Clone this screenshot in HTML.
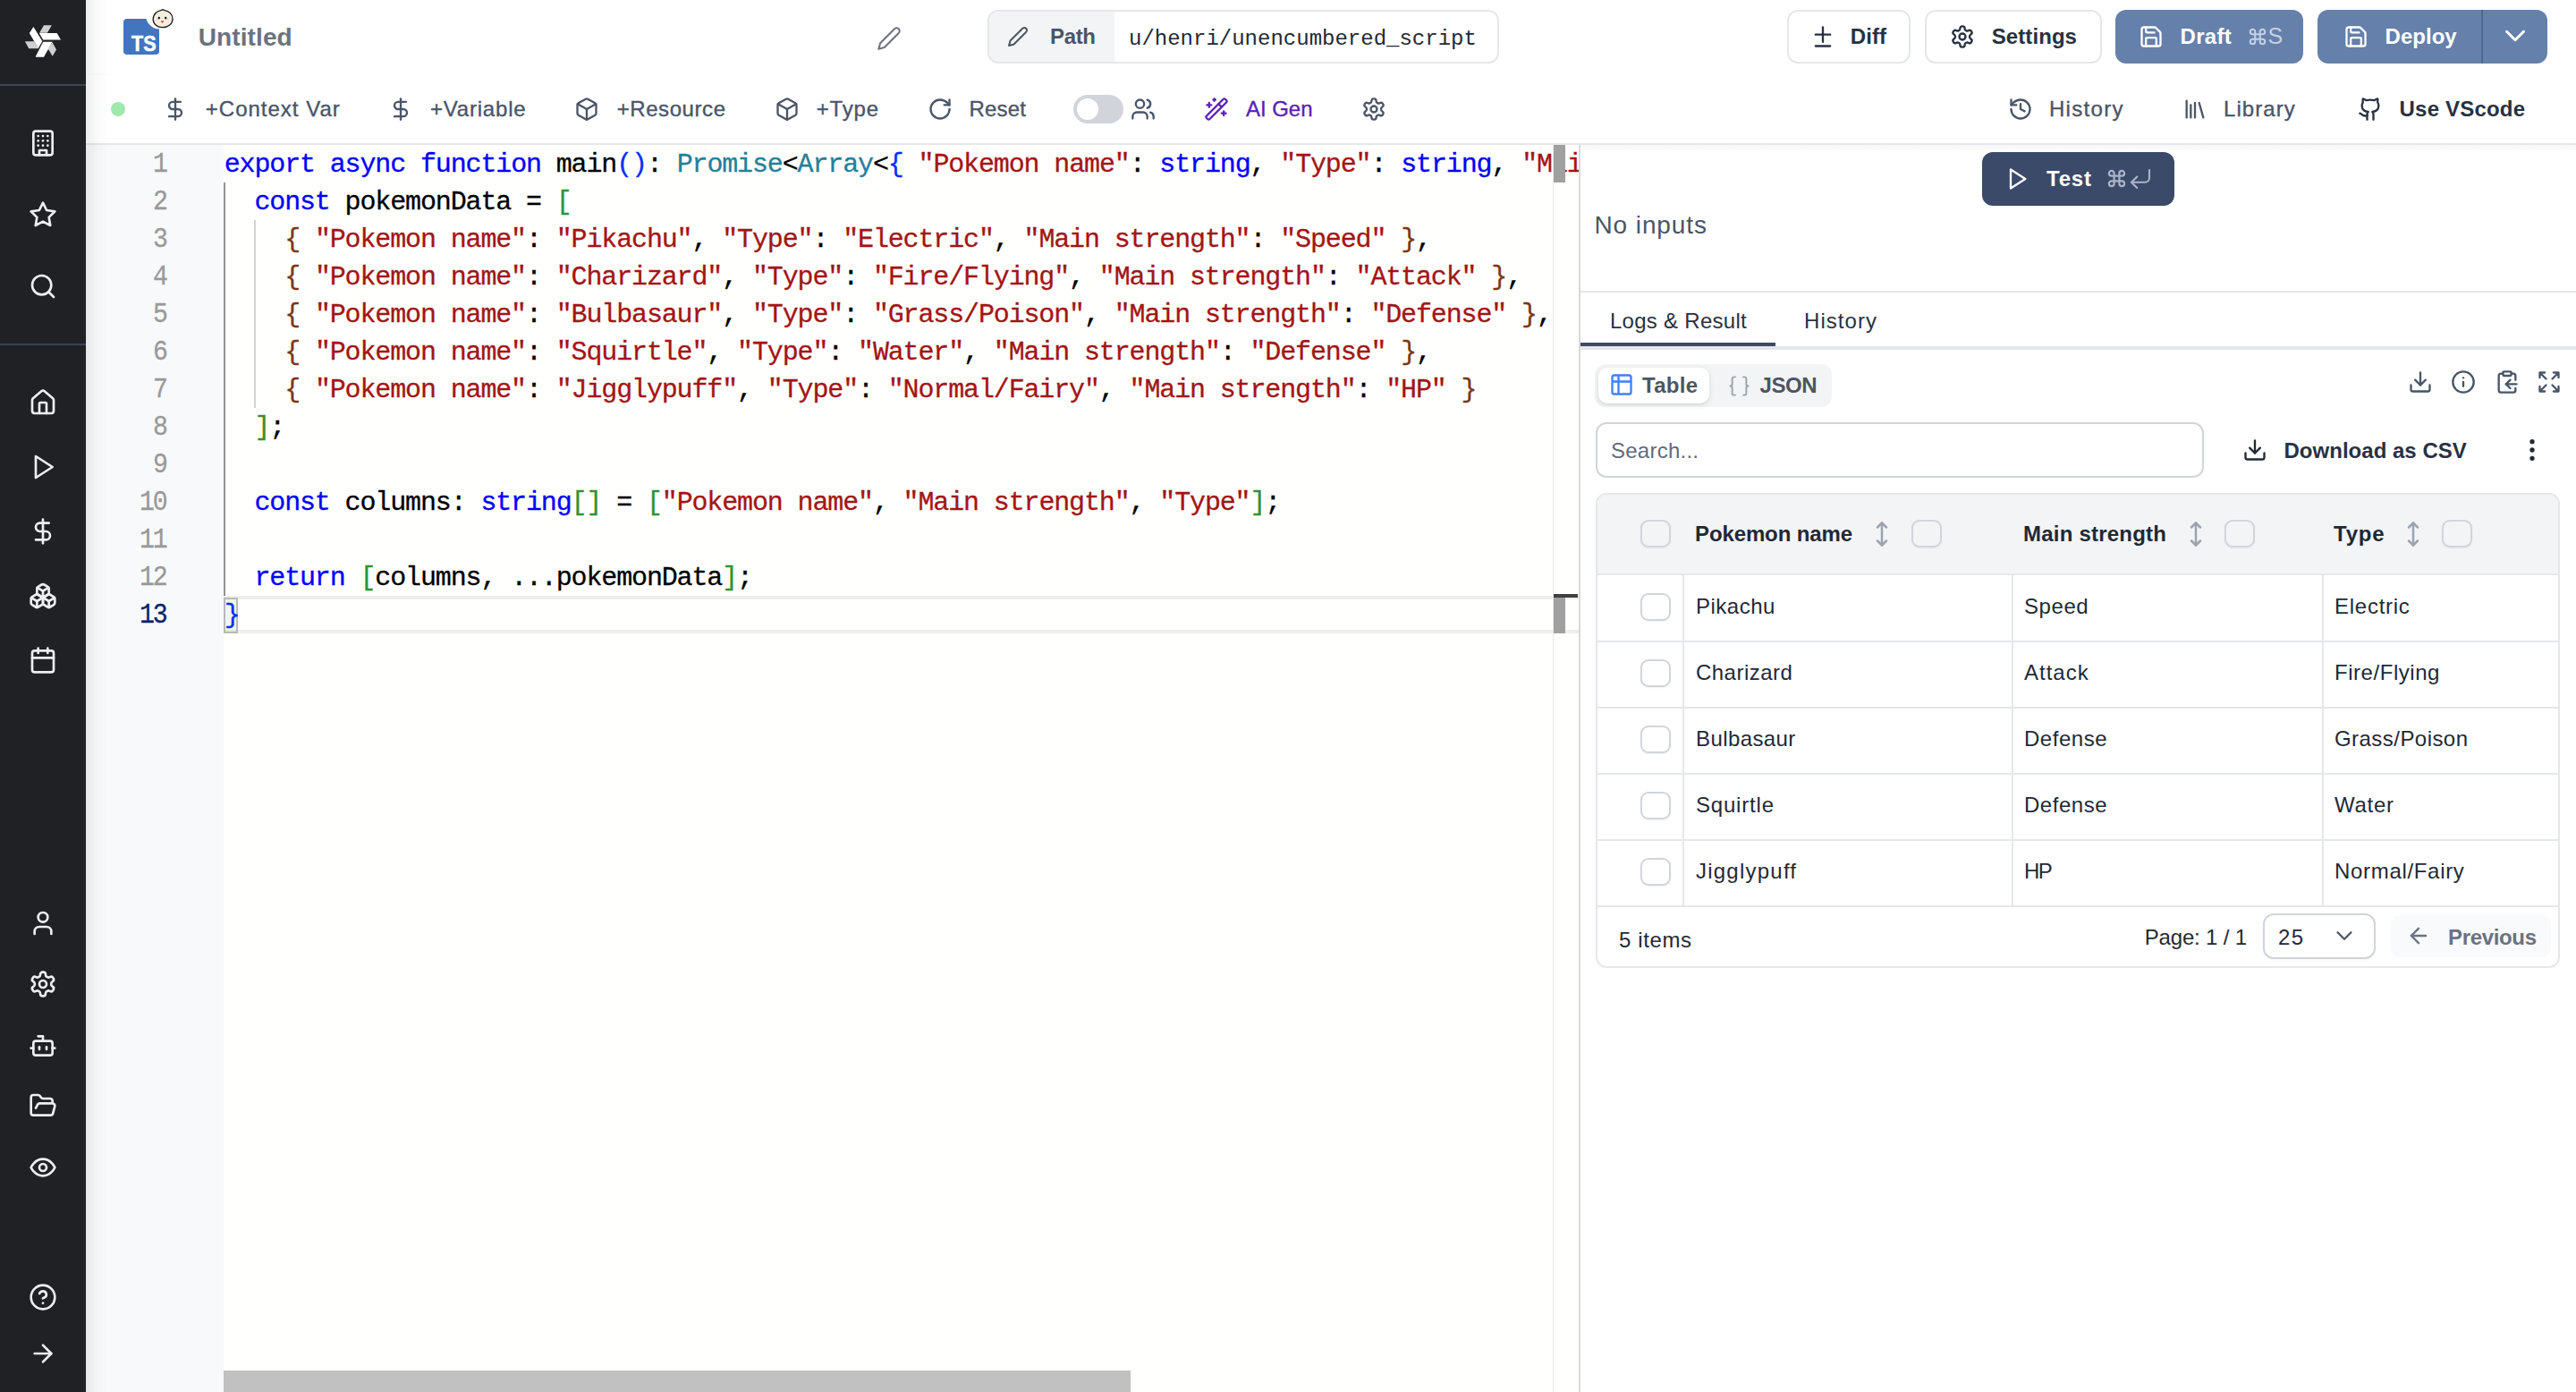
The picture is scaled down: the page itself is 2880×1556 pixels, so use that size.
<!DOCTYPE html>
<html><head><meta charset="utf-8"><title>Windmill</title>
<style>
html,body{margin:0;padding:0;width:2880px;height:1556px;overflow:hidden;background:#ffffff;position:relative}
.t{position:absolute;white-space:pre;line-height:1;font-family:"Liberation Sans",sans-serif}
.r{position:absolute}
</style></head><body>
<div class="r" style="left:0px;top:0px;width:96px;height:1556px;background:#202125;"></div>
<div class="r" style="left:0px;top:94px;width:96px;height:2px;background:#3b4456;"></div>
<div class="r" style="left:0px;top:384px;width:96px;height:2px;background:#3b4456;"></div>
<svg class="r" style="left:18px;top:18px" width="60" height="60" viewBox="0 0 1392 1392">
<polygon fill="#cfcfcf" points="720,235 925,235 810,435 605,435"/>
<polygon fill="#cfcfcf" points="230,655 470,655 580,840 330,840"/>
<polygon fill="#cfcfcf" points="940,680 1045,870 945,1040 830,855"/>
<polygon fill="#ffffff" points="450,280 680,650 575,835 345,440"/>
<polygon fill="#ffffff" points="600,440 1060,440 1160,615 700,615"/>
<polygon fill="#ffffff" points="700,665 940,665 720,1060 500,1060"/>
</svg>
<svg class="r" style="left:32.0px;top:144.0px;" width="32" height="32" viewBox="0 0 24 24" fill="none" stroke="#eceef1" stroke-width="2" stroke-linecap="round" stroke-linejoin="round"><rect width="16" height="20" x="4" y="2" rx="2" ry="2"/><path d="M9 22v-4h6v4"/><path d="M8 6h.01"/><path d="M16 6h.01"/><path d="M12 6h.01"/><path d="M12 10h.01"/><path d="M12 14h.01"/><path d="M16 10h.01"/><path d="M16 14h.01"/><path d="M8 10h.01"/><path d="M8 14h.01"/></svg>
<svg class="r" style="left:32.0px;top:223.5px;" width="32" height="32" viewBox="0 0 24 24" fill="none" stroke="#eceef1" stroke-width="2" stroke-linecap="round" stroke-linejoin="round"><polygon points="12 2 15.09 8.26 22 9.27 17 14.14 18.18 21.02 12 17.77 5.82 21.02 7 14.14 2 9.27 8.91 8.26 12 2"/></svg>
<svg class="r" style="left:32.0px;top:304.0px;" width="32" height="32" viewBox="0 0 24 24" fill="none" stroke="#eceef1" stroke-width="2" stroke-linecap="round" stroke-linejoin="round"><circle cx="11" cy="11" r="8"/><path d="m21 21-4.3-4.3"/></svg>
<svg class="r" style="left:32.0px;top:434.0px;" width="32" height="32" viewBox="0 0 24 24" fill="none" stroke="#eceef1" stroke-width="2" stroke-linecap="round" stroke-linejoin="round"><path d="M15 21v-8a1 1 0 0 0-1-1h-4a1 1 0 0 0-1 1v8"/><path d="M3 10a2 2 0 0 1 .709-1.528l7-5.999a2 2 0 0 1 2.582 0l7 5.999A2 2 0 0 1 21 10v9a2 2 0 0 1-2 2H5a2 2 0 0 1-2-2z"/></svg>
<svg class="r" style="left:32.0px;top:506.0px;" width="32" height="32" viewBox="0 0 24 24" fill="none" stroke="#eceef1" stroke-width="2" stroke-linecap="round" stroke-linejoin="round"><polygon points="6 3 20 12 6 21 6 3"/></svg>
<svg class="r" style="left:32.0px;top:578.0px;" width="32" height="32" viewBox="0 0 24 24" fill="none" stroke="#eceef1" stroke-width="2" stroke-linecap="round" stroke-linejoin="round"><line x1="12" x2="12" y1="2" y2="22"/><path d="M17 5H9.5a3.5 3.5 0 0 0 0 7h5a3.5 3.5 0 0 1 0 7H6"/></svg>
<svg class="r" style="left:32.0px;top:650.0px;" width="32" height="32" viewBox="0 0 24 24" fill="none" stroke="#eceef1" stroke-width="2" stroke-linecap="round" stroke-linejoin="round"><path d="M2.97 12.92A2 2 0 0 0 2 14.63v3.24a2 2 0 0 0 .97 1.71l3 1.8a2 2 0 0 0 2.06 0L12 19v-5.5l-5-3-4.03 2.42Z"/><path d="m7 16.5-4.74-2.85"/><path d="m7 16.5 5-3"/><path d="M7 16.5v5.17"/><path d="M12 13.5V19l3.97 2.38a2 2 0 0 0 2.06 0l3-1.8a2 2 0 0 0 .97-1.71v-3.24a2 2 0 0 0-.97-1.71L17 10.5l-5 3Z"/><path d="m17 16.5-5-3"/><path d="m17 16.5 4.74-2.85"/><path d="M17 16.5v5.17"/><path d="M7.97 4.42A2 2 0 0 0 7 6.13v4.37l5 3 5-3V6.13a2 2 0 0 0-.97-1.71l-3-1.8a2 2 0 0 0-2.06 0l-3 1.8Z"/><path d="M12 8 7.26 5.15"/><path d="m12 8 4.74-2.85"/><path d="M12 13.5V8"/></svg>
<svg class="r" style="left:32.0px;top:722.0px;" width="32" height="32" viewBox="0 0 24 24" fill="none" stroke="#eceef1" stroke-width="2" stroke-linecap="round" stroke-linejoin="round"><rect width="18" height="18" x="3" y="4" rx="2" ry="2"/><line x1="16" x2="16" y1="2" y2="6"/><line x1="8" x2="8" y1="2" y2="6"/><line x1="3" x2="21" y1="10" y2="10"/></svg>
<svg class="r" style="left:32.0px;top:1016.0px;" width="32" height="32" viewBox="0 0 24 24" fill="none" stroke="#eceef1" stroke-width="2" stroke-linecap="round" stroke-linejoin="round"><path d="M19 21v-2a4 4 0 0 0-4-4H9a4 4 0 0 0-4 4v2"/><circle cx="12" cy="7" r="4"/></svg>
<svg class="r" style="left:32.0px;top:1084.0px;" width="32" height="32" viewBox="0 0 24 24" fill="none" stroke="#eceef1" stroke-width="2" stroke-linecap="round" stroke-linejoin="round"><path d="M12.22 2h-.44a2 2 0 0 0-2 2v.18a2 2 0 0 1-1 1.73l-.43.25a2 2 0 0 1-2 0l-.15-.08a2 2 0 0 0-2.73.73l-.22.38a2 2 0 0 0 .73 2.73l.15.1a2 2 0 0 1 1 1.72v.51a2 2 0 0 1-1 1.74l-.15.09a2 2 0 0 0-.73 2.73l.22.38a2 2 0 0 0 2.73.73l.15-.08a2 2 0 0 1 2 0l.43.25a2 2 0 0 1 1 1.73V20a2 2 0 0 0 2 2h.44a2 2 0 0 0 2-2v-.18a2 2 0 0 1 1-1.73l.43-.25a2 2 0 0 1 2 0l.15.08a2 2 0 0 0 2.73-.73l.22-.39a2 2 0 0 0-.73-2.73l-.15-.08a2 2 0 0 1-1-1.74v-.5a2 2 0 0 1 1-1.74l.15-.09a2 2 0 0 0 .73-2.73l-.22-.38a2 2 0 0 0-2.73-.73l-.15.08a2 2 0 0 1-2 0l-.43-.25a2 2 0 0 1-1-1.73V4a2 2 0 0 0-2-2z"/><circle cx="12" cy="12" r="3"/></svg>
<svg class="r" style="left:32.0px;top:1153.0px;" width="32" height="32" viewBox="0 0 24 24" fill="none" stroke="#eceef1" stroke-width="2" stroke-linecap="round" stroke-linejoin="round"><path d="M12 8V4H8"/><rect width="16" height="12" x="4" y="8" rx="2"/><path d="M2 14h2"/><path d="M20 14h2"/><path d="M15 13v2"/><path d="M9 13v2"/></svg>
<svg class="r" style="left:32.0px;top:1220.0px;" width="32" height="32" viewBox="0 0 24 24" fill="none" stroke="#eceef1" stroke-width="2" stroke-linecap="round" stroke-linejoin="round"><path d="m6 14 1.5-2.9A2 2 0 0 1 9.24 10H20a2 2 0 0 1 1.94 2.5l-1.54 6a2 2 0 0 1-1.95 1.5H4a2 2 0 0 1-2-2V5a2 2 0 0 1 2-2h3.9a2 2 0 0 1 1.69.9l.81 1.2a2 2 0 0 0 1.67.9H18a2 2 0 0 1 2 2v2"/></svg>
<svg class="r" style="left:32.0px;top:1289.0px;" width="32" height="32" viewBox="0 0 24 24" fill="none" stroke="#eceef1" stroke-width="2" stroke-linecap="round" stroke-linejoin="round"><path d="M2 12s3-7 10-7 10 7 10 7-3 7-10 7-10-7-10-7Z"/><circle cx="12" cy="12" r="3"/></svg>
<svg class="r" style="left:32.0px;top:1434.0px;" width="32" height="32" viewBox="0 0 24 24" fill="none" stroke="#eceef1" stroke-width="2" stroke-linecap="round" stroke-linejoin="round"><circle cx="12" cy="12" r="10"/><path d="M9.09 9a3 3 0 0 1 5.83 1c0 2-3 3-3 3"/><path d="M12 17h.01"/></svg>
<svg class="r" style="left:32.0px;top:1497.0px;" width="32" height="32" viewBox="0 0 24 24" fill="none" stroke="#eceef1" stroke-width="2" stroke-linecap="round" stroke-linejoin="round"><path d="M5 12h14"/><path d="m12 5 7 7-7 7"/></svg>
<div class="r" style="left:96px;top:0px;width:26px;height:1556px;background:linear-gradient(to right, rgba(0,0,0,0.07), rgba(0,0,0,0.02) 50%, rgba(0,0,0,0));z-index:50"></div>
<div class="r" style="left:96px;top:0px;width:2784px;height:160px;background:#ffffff;z-index:-1"></div>
<div class="r" style="left:96px;top:160px;width:2784px;height:2px;background:#e5e7eb;"></div>
<svg class="r" style="left:136px;top:8px" width="64" height="56" viewBox="0 0 64 56">
<rect x="2" y="13" width="40" height="40" rx="4" fill="#4175c0"/>
<circle cx="42.5" cy="9" r="15.5" fill="#ffffff"/>
<text x="11" y="48.5" font-family="Liberation Sans" font-weight="700" font-size="24" textLength="27.5" lengthAdjust="spacingAndGlyphs" fill="#fff" stroke="#fff" stroke-width="0.6">TS</text>
<path d="M35.2 13.5 C35.2 7.5 40 4.2 44.5 3.3 C45.5 2.6 46.5 2.6 47.5 3.3 C52.5 4.3 57 7.5 57 13.2 C57 19 52 22.6 46 22.6 C40 22.6 35.2 19.2 35.2 13.5 Z" fill="#f5eddd" stroke="#1a1a1a" stroke-width="1.3"/>
<ellipse cx="39.5" cy="13.6" rx="1.6" ry="0.8" fill="#f7c9d6"/><ellipse cx="51.2" cy="13.6" rx="1.6" ry="0.8" fill="#f7c9d6"/>
<ellipse cx="41.8" cy="12.1" rx="1.2" ry="1.4" fill="#111"/><ellipse cx="49.2" cy="12.1" rx="1.2" ry="1.4" fill="#111"/>
<path d="M43.6 15.4 h3.8 l-1.9 2.4z" fill="#b8262b"/>
</svg>
<div class="t" style="left:221.7px;top:27.5px;font-size:28px;font-weight:700;color:#6b7280;letter-spacing:0.11px;font-family:'Liberation Sans', sans-serif;">Untitled</div>
<svg class="r" style="left:980.0px;top:29.0px;" width="28" height="28" viewBox="0 0 24 24" fill="none" stroke="#6b7280" stroke-width="1.75" stroke-linecap="round" stroke-linejoin="round"><path d="M17 3a2.85 2.83 0 1 1 4 4L7.5 20.5 2 22l1.5-5.5Z"/></svg>
<div class="r" style="left:96px;top:82px;width:2784px;height:2px;background:#fdfdfd;"></div>
<div class="r" style="left:1104px;top:11px;width:572px;height:60px;background:#ffffff;border:2px solid #e5e7eb;border-radius:12px;box-sizing:border-box"></div>
<div class="r" style="left:1106px;top:13px;width:140px;height:56px;background:#f3f4f6;border-radius:10px 0 0 10px"></div>
<svg class="r" style="left:1125.5px;top:28.5px;" width="24" height="24" viewBox="0 0 24 24" fill="none" stroke="#4b5563" stroke-width="2" stroke-linecap="round" stroke-linejoin="round"><path d="M17 3a2.85 2.83 0 1 1 4 4L7.5 20.5 2 22l1.5-5.5Z"/></svg>
<div class="t" style="left:1174.0px;top:29.0px;font-size:24px;font-weight:700;color:#4b5563;letter-spacing:-0.34px;font-family:'Liberation Sans', sans-serif;">Path</div>
<div class="t" style="left:1262.0px;top:31.5px;font-size:24px;font-weight:400;color:#1f2937;letter-spacing:0.00px;font-family:'Liberation Mono', monospace;">u/henri/unencumbered_script</div>
<div class="r" style="left:1998px;top:11px;width:138px;height:60px;background:#fff;border:2px solid #e5e7eb;border-radius:12px;box-sizing:border-box"></div>
<svg class="r" style="left:2024.0px;top:26.5px;" width="28" height="28" viewBox="0 0 24 24" fill="none" stroke="#283142" stroke-width="2" stroke-linecap="round" stroke-linejoin="round"><path d="M12 3v14"/><path d="M5 10h14"/><path d="M5 21h14"/></svg>
<div class="t" style="left:2068.8px;top:28.9px;font-size:24px;font-weight:700;color:#283142;letter-spacing:0.07px;font-family:'Liberation Sans', sans-serif;">Diff</div>
<div class="r" style="left:2152px;top:11px;width:198px;height:60px;background:#fff;border:2px solid #e5e7eb;border-radius:12px;box-sizing:border-box"></div>
<svg class="r" style="left:2179.5px;top:26.5px;" width="28" height="28" viewBox="0 0 24 24" fill="none" stroke="#283142" stroke-width="2" stroke-linecap="round" stroke-linejoin="round"><path d="M12.22 2h-.44a2 2 0 0 0-2 2v.18a2 2 0 0 1-1 1.73l-.43.25a2 2 0 0 1-2 0l-.15-.08a2 2 0 0 0-2.73.73l-.22.38a2 2 0 0 0 .73 2.73l.15.1a2 2 0 0 1 1 1.72v.51a2 2 0 0 1-1 1.74l-.15.09a2 2 0 0 0-.73 2.73l.22.38a2 2 0 0 0 2.73.73l.15-.08a2 2 0 0 1 2 0l.43.25a2 2 0 0 1 1 1.73V20a2 2 0 0 0 2 2h.44a2 2 0 0 0 2-2v-.18a2 2 0 0 1 1-1.73l.43-.25a2 2 0 0 1 2 0l.15.08a2 2 0 0 0 2.73-.73l.22-.39a2 2 0 0 0-.73-2.73l-.15-.08a2 2 0 0 1-1-1.74v-.5a2 2 0 0 1 1-1.74l.15-.09a2 2 0 0 0 .73-2.73l-.22-.38a2 2 0 0 0-2.73-.73l-.15.08a2 2 0 0 1-2 0l-.43-.25a2 2 0 0 1-1-1.73V4a2 2 0 0 0-2-2z"/><circle cx="12" cy="12" r="3"/></svg>
<div class="t" style="left:2226.8px;top:28.9px;font-size:24px;font-weight:700;color:#283142;letter-spacing:0.07px;font-family:'Liberation Sans', sans-serif;">Settings</div>
<div class="r" style="left:2365px;top:11px;width:210px;height:60px;background:#6580aa;border-radius:12px"></div>
<svg class="r" style="left:2391.0px;top:26.5px;" width="28" height="28" viewBox="0 0 24 24" fill="none" stroke="#ffffff" stroke-width="2" stroke-linecap="round" stroke-linejoin="round"><path d="M15.2 3a2 2 0 0 1 1.4.6l3.8 3.8a2 2 0 0 1 .6 1.4V19a2 2 0 0 1-2 2H5a2 2 0 0 1-2-2V5a2 2 0 0 1 2-2z"/><path d="M17 21v-7a1 1 0 0 0-1-1H8a1 1 0 0 0-1 1v7"/><path d="M7 3v4a1 1 0 0 0 1 1h7"/></svg>
<div class="t" style="left:2437.5px;top:28.9px;font-size:24px;font-weight:700;color:#ffffff;letter-spacing:0.32px;font-family:'Liberation Sans', sans-serif;">Draft</div>
<svg class="r" style="left:2512.5px;top:29.5px;" width="22" height="22" viewBox="0 0 24 24" fill="none" stroke="#c5d0e3" stroke-width="2.3" stroke-linecap="round" stroke-linejoin="round"><path d="M15 6v12a3 3 0 1 0 3-3H6a3 3 0 1 0 3 3V6a3 3 0 1 0-3 3h12a3 3 0 1 0-3-3"/></svg>
<div class="t" style="left:2535.5px;top:27.9px;font-size:25px;font-weight:400;color:#c5d0e3;letter-spacing:0.00px;font-family:'Liberation Sans', sans-serif;">S</div>
<div class="r" style="left:2591px;top:11px;width:257px;height:60px;background:#6580aa;border-radius:12px"></div>
<svg class="r" style="left:2620.0px;top:26.5px;" width="28" height="28" viewBox="0 0 24 24" fill="none" stroke="#ffffff" stroke-width="2" stroke-linecap="round" stroke-linejoin="round"><path d="M15.2 3a2 2 0 0 1 1.4.6l3.8 3.8a2 2 0 0 1 .6 1.4V19a2 2 0 0 1-2 2H5a2 2 0 0 1-2-2V5a2 2 0 0 1 2-2z"/><path d="M17 21v-7a1 1 0 0 0-1-1H8a1 1 0 0 0-1 1v7"/><path d="M7 3v4a1 1 0 0 0 1 1h7"/></svg>
<div class="t" style="left:2666.6px;top:28.9px;font-size:24px;font-weight:700;color:#ffffff;letter-spacing:0.02px;font-family:'Liberation Sans', sans-serif;">Deploy</div>
<div class="r" style="left:2774px;top:11px;width:2px;height:60px;background:#4f6890;"></div>
<svg class="r" style="left:2792.5px;top:20.5px;" width="38" height="38" viewBox="0 0 24 24" fill="none" stroke="#ffffff" stroke-width="1.9" stroke-linecap="round" stroke-linejoin="round"><path d="m6 9 6 6 6-6"/></svg>
<div class="r" style="left:124px;top:114px;width:16px;height:16px;background:#9fe8ae;border-radius:50%"></div>
<svg class="r" style="left:182.0px;top:108.0px;" width="28" height="28" viewBox="0 0 24 24" fill="none" stroke="#4a5568" stroke-width="2" stroke-linecap="round" stroke-linejoin="round"><line x1="12" x2="12" y1="2" y2="22"/><path d="M17 5H9.5a3.5 3.5 0 0 0 0 7h5a3.5 3.5 0 0 1 0 7H6"/></svg>
<div class="t" style="left:229.8px;top:109.6px;font-size:24px;font-weight:400;color:#4a5568;letter-spacing:1.00px;font-family:'Liberation Sans', sans-serif;-webkit-text-stroke:0.35px #4a5568;">+Context Var</div>
<svg class="r" style="left:434.4px;top:108.0px;" width="28" height="28" viewBox="0 0 24 24" fill="none" stroke="#4a5568" stroke-width="2" stroke-linecap="round" stroke-linejoin="round"><line x1="12" x2="12" y1="2" y2="22"/><path d="M17 5H9.5a3.5 3.5 0 0 0 0 7h5a3.5 3.5 0 0 1 0 7H6"/></svg>
<div class="t" style="left:481.0px;top:109.6px;font-size:24px;font-weight:400;color:#4a5568;letter-spacing:0.79px;font-family:'Liberation Sans', sans-serif;-webkit-text-stroke:0.35px #4a5568;">+Variable</div>
<svg class="r" style="left:642.0px;top:108.0px;" width="28" height="28" viewBox="0 0 24 24" fill="none" stroke="#4a5568" stroke-width="2" stroke-linecap="round" stroke-linejoin="round"><path d="M21 8a2 2 0 0 0-1-1.73l-7-4a2 2 0 0 0-2 0l-7 4A2 2 0 0 0 3 8v8a2 2 0 0 0 1 1.73l7 4a2 2 0 0 0 2 0l7-4A2 2 0 0 0 21 16Z"/><path d="m3.3 7 8.7 5 8.7-5"/><path d="M12 22V12"/></svg>
<div class="t" style="left:689.7px;top:109.6px;font-size:24px;font-weight:400;color:#4a5568;letter-spacing:0.57px;font-family:'Liberation Sans', sans-serif;-webkit-text-stroke:0.35px #4a5568;">+Resource</div>
<svg class="r" style="left:866.0px;top:108.0px;" width="28" height="28" viewBox="0 0 24 24" fill="none" stroke="#4a5568" stroke-width="2" stroke-linecap="round" stroke-linejoin="round"><path d="M21 8a2 2 0 0 0-1-1.73l-7-4a2 2 0 0 0-2 0l-7 4A2 2 0 0 0 3 8v8a2 2 0 0 0 1 1.73l7 4a2 2 0 0 0 2 0l7-4A2 2 0 0 0 21 16Z"/><path d="m3.3 7 8.7 5 8.7-5"/><path d="M12 22V12"/></svg>
<div class="t" style="left:912.7px;top:109.6px;font-size:24px;font-weight:400;color:#4a5568;letter-spacing:0.82px;font-family:'Liberation Sans', sans-serif;-webkit-text-stroke:0.35px #4a5568;">+Type</div>
<svg class="r" style="left:1037.4px;top:108.0px;" width="28" height="28" viewBox="0 0 24 24" fill="none" stroke="#4a5568" stroke-width="2" stroke-linecap="round" stroke-linejoin="round"><path d="M21 12a9 9 0 1 1-9-9c2.52 0 4.93 1 6.74 2.74L21 8"/><path d="M21 3v5h-5"/></svg>
<div class="t" style="left:1083.5px;top:109.6px;font-size:24px;font-weight:400;color:#4a5568;letter-spacing:0.20px;font-family:'Liberation Sans', sans-serif;-webkit-text-stroke:0.35px #4a5568;">Reset</div>
<div class="r" style="left:1200px;top:106px;width:56px;height:32px;background:#d1d5db;border-radius:16px"></div>
<div class="r" style="left:1204px;top:110px;width:24px;height:24px;background:#ffffff;border-radius:50%"></div>
<svg class="r" style="left:1264.0px;top:108.0px;" width="28" height="28" viewBox="0 0 24 24" fill="none" stroke="#4a5568" stroke-width="2" stroke-linecap="round" stroke-linejoin="round"><path d="M16 21v-2a4 4 0 0 0-4-4H6a4 4 0 0 0-4 4v2"/><circle cx="9" cy="7" r="4"/><path d="M22 21v-2a4 4 0 0 0-3-3.87"/><path d="M16 3.13a4 4 0 0 1 0 7.75"/></svg>
<svg class="r" style="left:1346.0px;top:108.0px;" width="28" height="28" viewBox="0 0 24 24" fill="none" stroke="#5b21b6" stroke-width="2" stroke-linecap="round" stroke-linejoin="round"><path d="m21.64 3.64-1.28-1.28a1.21 1.21 0 0 0-1.72 0L2.36 18.64a1.21 1.21 0 0 0 0 1.72l1.28 1.28a1.2 1.2 0 0 0 1.72 0L21.64 5.36a1.2 1.2 0 0 0 0-1.72"/><path d="m14 7 3 3"/><path d="M5 6v4"/><path d="M19 14v4"/><path d="M10 2v2"/><path d="M7 8H3"/><path d="M21 16h-4"/><path d="M11 3H9"/></svg>
<div class="t" style="left:1393.0px;top:109.6px;font-size:24px;font-weight:400;color:#5b21b6;letter-spacing:-0.04px;font-family:'Liberation Sans', sans-serif;-webkit-text-stroke:0.35px #5b21b6;">AI Gen</div>
<svg class="r" style="left:1521.5px;top:108.0px;" width="28" height="28" viewBox="0 0 24 24" fill="none" stroke="#4a5568" stroke-width="2" stroke-linecap="round" stroke-linejoin="round"><path d="M12.22 2h-.44a2 2 0 0 0-2 2v.18a2 2 0 0 1-1 1.73l-.43.25a2 2 0 0 1-2 0l-.15-.08a2 2 0 0 0-2.73.73l-.22.38a2 2 0 0 0 .73 2.73l.15.1a2 2 0 0 1 1 1.72v.51a2 2 0 0 1-1 1.74l-.15.09a2 2 0 0 0-.73 2.73l.22.38a2 2 0 0 0 2.73.73l.15-.08a2 2 0 0 1 2 0l.43.25a2 2 0 0 1 1 1.73V20a2 2 0 0 0 2 2h.44a2 2 0 0 0 2-2v-.18a2 2 0 0 1 1-1.73l.43-.25a2 2 0 0 1 2 0l.15.08a2 2 0 0 0 2.73-.73l.22-.39a2 2 0 0 0-.73-2.73l-.15-.08a2 2 0 0 1-1-1.74v-.5a2 2 0 0 1 1-1.74l.15-.09a2 2 0 0 0 .73-2.73l-.22-.38a2 2 0 0 0-2.73-.73l-.15.08a2 2 0 0 1-2 0l-.43-.25a2 2 0 0 1-1-1.73V4a2 2 0 0 0-2-2z"/><circle cx="12" cy="12" r="3"/></svg>
<svg class="r" style="left:2245.0px;top:108.0px;" width="28" height="28" viewBox="0 0 24 24" fill="none" stroke="#4a5568" stroke-width="2" stroke-linecap="round" stroke-linejoin="round"><path d="M3 12a9 9 0 1 0 9-9 9.75 9.75 0 0 0-6.74 2.74L3 8"/><path d="M3 3v5h5"/><path d="M12 7v5l4 2"/></svg>
<div class="t" style="left:2291.0px;top:109.6px;font-size:24px;font-weight:400;color:#4a5568;letter-spacing:1.29px;font-family:'Liberation Sans', sans-serif;-webkit-text-stroke:0.35px #4a5568;">History</div>
<svg class="r" style="left:2439.5px;top:108.0px;" width="28" height="28" viewBox="0 0 24 24" fill="none" stroke="#4a5568" stroke-width="2" stroke-linecap="round" stroke-linejoin="round"><path d="m16 6 4 14"/><path d="M12 6v14"/><path d="M8 8v12"/><path d="M4 4v16"/></svg>
<div class="t" style="left:2486.0px;top:109.6px;font-size:24px;font-weight:400;color:#4a5568;letter-spacing:1.07px;font-family:'Liberation Sans', sans-serif;-webkit-text-stroke:0.35px #4a5568;">Library</div>
<svg class="r" style="left:2636.4px;top:108.0px;" width="28" height="28" viewBox="0 0 24 24" fill="none" stroke="#283142" stroke-width="2" stroke-linecap="round" stroke-linejoin="round"><path d="M15 22v-4a4.8 4.8 0 0 0-1-3.5c3 0 6-2 6-5.5.08-1.25-.27-2.48-1-3.5.28-1.15.28-2.35 0-3.5 0 0-1 0-3 1.5-2.64-.5-5.36-.5-8 0C6 2 5 2 5 2c-.3 1.15-.3 2.35 0 3.5A5.403 5.403 0 0 0 4 9c0 3.5 3 5.5 6 5.5-.39.49-.68 1.05-.85 1.65-.17.6-.22 1.23-.15 1.85v4"/><path d="M9 18c-4.51 2-5-2-7-2"/></svg>
<div class="t" style="left:2682.6px;top:109.6px;font-size:24px;font-weight:700;color:#283142;letter-spacing:0.19px;font-family:'Liberation Sans', sans-serif;">Use VScode</div>
<div class="r" style="left:96px;top:162px;width:154px;height:1394px;background:#f8f9fb;"></div>
<div class="r" style="left:250px;top:162px;width:1515px;height:1394px;background:#fffffe;"></div>
<div class="r" style="left:250px;top:666px;width:1515px;height:4px;background:#eeeeee;"></div>
<div class="r" style="left:250px;top:704px;width:1515px;height:4px;background:#eeeeee;"></div>
<div class="r" style="left:250px;top:668px;width:16px;height:40px;background:rgba(0,100,0,0.06);border:2px solid #b9b9b9;box-sizing:border-box"></div>
<div class="r" style="left:250px;top:204px;width:2px;height:462px;background:#939393;"></div>
<div class="r" style="left:284px;top:246px;width:2px;height:210px;background:#d3d3d3;"></div>
<div class="r" style="left:0;top:0;width:1765px;height:1556px;overflow:hidden">
<div class="t" style="left:168.6px;top:167.5px;font-size:32px;font-weight:400;color:#999999;letter-spacing:0.00px;font-family:'Liberation Mono', monospace;letter-spacing:-2.4px;-webkit-text-stroke:0.3px #999999;transform:scaleX(0.88);transform-origin:16.9px 0">1</div>
<div class="t" style="left:250.7px;top:169.0px;font-size:30px;letter-spacing:-1.14px;-webkit-text-stroke:0.3px currentColor;font-family:'Liberation Mono',monospace"><span style="color:#0000ff">export</span><span style="color:#000000"> </span><span style="color:#0000ff">async</span><span style="color:#000000"> </span><span style="color:#0000ff">function</span><span style="color:#000000"> </span><span style="color:#000000">main</span><span style="color:#0431fa">()</span><span style="color:#000000">: </span><span style="color:#267f99">Promise</span><span style="color:#000000">&lt;</span><span style="color:#267f99">Array</span><span style="color:#000000">&lt;</span><span style="color:#0431fa">{</span><span style="color:#000000"> </span><span style="color:#a31515">"Pokemon name"</span><span style="color:#000000">: </span><span style="color:#0000ff">string</span><span style="color:#000000">, </span><span style="color:#a31515">"Type"</span><span style="color:#000000">: </span><span style="color:#0000ff">string</span><span style="color:#000000">, </span><span style="color:#a31515">"Main strength"</span><span style="color:#000000">: </span><span style="color:#0000ff">string</span><span style="color:#000000"> </span><span style="color:#0431fa">}</span><span style="color:#000000">&gt;&gt;</span><span style="color:#000000"> </span><span style="color:#0431fa">{</span></div>
<div class="t" style="left:168.6px;top:209.5px;font-size:32px;font-weight:400;color:#999999;letter-spacing:0.00px;font-family:'Liberation Mono', monospace;letter-spacing:-2.4px;-webkit-text-stroke:0.3px #999999;transform:scaleX(0.88);transform-origin:16.9px 0">2</div>
<div class="t" style="left:250.7px;top:211.0px;font-size:30px;letter-spacing:-1.14px;-webkit-text-stroke:0.3px currentColor;font-family:'Liberation Mono',monospace"><span style="color:#000000">  </span><span style="color:#0000ff">const</span><span style="color:#000000"> pokemonData = </span><span style="color:#319331">[</span></div>
<div class="t" style="left:168.6px;top:251.5px;font-size:32px;font-weight:400;color:#999999;letter-spacing:0.00px;font-family:'Liberation Mono', monospace;letter-spacing:-2.4px;-webkit-text-stroke:0.3px #999999;transform:scaleX(0.88);transform-origin:16.9px 0">3</div>
<div class="t" style="left:250.7px;top:253.0px;font-size:30px;letter-spacing:-1.14px;-webkit-text-stroke:0.3px currentColor;font-family:'Liberation Mono',monospace"><span style="color:#000000">    </span><span style="color:#7b3814">{</span><span style="color:#000000"> </span><span style="color:#a31515">"Pokemon name"</span><span style="color:#000000">: </span><span style="color:#a31515">"Pikachu"</span><span style="color:#000000">, </span><span style="color:#a31515">"Type"</span><span style="color:#000000">: </span><span style="color:#a31515">"Electric"</span><span style="color:#000000">, </span><span style="color:#a31515">"Main strength"</span><span style="color:#000000">: </span><span style="color:#a31515">"Speed"</span><span style="color:#000000"> </span><span style="color:#7b3814">}</span><span style="color:#000000">,</span></div>
<div class="t" style="left:168.6px;top:293.5px;font-size:32px;font-weight:400;color:#999999;letter-spacing:0.00px;font-family:'Liberation Mono', monospace;letter-spacing:-2.4px;-webkit-text-stroke:0.3px #999999;transform:scaleX(0.88);transform-origin:16.9px 0">4</div>
<div class="t" style="left:250.7px;top:295.0px;font-size:30px;letter-spacing:-1.14px;-webkit-text-stroke:0.3px currentColor;font-family:'Liberation Mono',monospace"><span style="color:#000000">    </span><span style="color:#7b3814">{</span><span style="color:#000000"> </span><span style="color:#a31515">"Pokemon name"</span><span style="color:#000000">: </span><span style="color:#a31515">"Charizard"</span><span style="color:#000000">, </span><span style="color:#a31515">"Type"</span><span style="color:#000000">: </span><span style="color:#a31515">"Fire/Flying"</span><span style="color:#000000">, </span><span style="color:#a31515">"Main strength"</span><span style="color:#000000">: </span><span style="color:#a31515">"Attack"</span><span style="color:#000000"> </span><span style="color:#7b3814">}</span><span style="color:#000000">,</span></div>
<div class="t" style="left:168.6px;top:335.5px;font-size:32px;font-weight:400;color:#999999;letter-spacing:0.00px;font-family:'Liberation Mono', monospace;letter-spacing:-2.4px;-webkit-text-stroke:0.3px #999999;transform:scaleX(0.88);transform-origin:16.9px 0">5</div>
<div class="t" style="left:250.7px;top:337.0px;font-size:30px;letter-spacing:-1.14px;-webkit-text-stroke:0.3px currentColor;font-family:'Liberation Mono',monospace"><span style="color:#000000">    </span><span style="color:#7b3814">{</span><span style="color:#000000"> </span><span style="color:#a31515">"Pokemon name"</span><span style="color:#000000">: </span><span style="color:#a31515">"Bulbasaur"</span><span style="color:#000000">, </span><span style="color:#a31515">"Type"</span><span style="color:#000000">: </span><span style="color:#a31515">"Grass/Poison"</span><span style="color:#000000">, </span><span style="color:#a31515">"Main strength"</span><span style="color:#000000">: </span><span style="color:#a31515">"Defense"</span><span style="color:#000000"> </span><span style="color:#7b3814">}</span><span style="color:#000000">,</span></div>
<div class="t" style="left:168.6px;top:377.5px;font-size:32px;font-weight:400;color:#999999;letter-spacing:0.00px;font-family:'Liberation Mono', monospace;letter-spacing:-2.4px;-webkit-text-stroke:0.3px #999999;transform:scaleX(0.88);transform-origin:16.9px 0">6</div>
<div class="t" style="left:250.7px;top:379.0px;font-size:30px;letter-spacing:-1.14px;-webkit-text-stroke:0.3px currentColor;font-family:'Liberation Mono',monospace"><span style="color:#000000">    </span><span style="color:#7b3814">{</span><span style="color:#000000"> </span><span style="color:#a31515">"Pokemon name"</span><span style="color:#000000">: </span><span style="color:#a31515">"Squirtle"</span><span style="color:#000000">, </span><span style="color:#a31515">"Type"</span><span style="color:#000000">: </span><span style="color:#a31515">"Water"</span><span style="color:#000000">, </span><span style="color:#a31515">"Main strength"</span><span style="color:#000000">: </span><span style="color:#a31515">"Defense"</span><span style="color:#000000"> </span><span style="color:#7b3814">}</span><span style="color:#000000">,</span></div>
<div class="t" style="left:168.6px;top:419.5px;font-size:32px;font-weight:400;color:#999999;letter-spacing:0.00px;font-family:'Liberation Mono', monospace;letter-spacing:-2.4px;-webkit-text-stroke:0.3px #999999;transform:scaleX(0.88);transform-origin:16.9px 0">7</div>
<div class="t" style="left:250.7px;top:421.0px;font-size:30px;letter-spacing:-1.14px;-webkit-text-stroke:0.3px currentColor;font-family:'Liberation Mono',monospace"><span style="color:#000000">    </span><span style="color:#7b3814">{</span><span style="color:#000000"> </span><span style="color:#a31515">"Pokemon name"</span><span style="color:#000000">: </span><span style="color:#a31515">"Jigglypuff"</span><span style="color:#000000">, </span><span style="color:#a31515">"Type"</span><span style="color:#000000">: </span><span style="color:#a31515">"Normal/Fairy"</span><span style="color:#000000">, </span><span style="color:#a31515">"Main strength"</span><span style="color:#000000">: </span><span style="color:#a31515">"HP"</span><span style="color:#000000"> </span><span style="color:#7b3814">}</span></div>
<div class="t" style="left:168.6px;top:461.5px;font-size:32px;font-weight:400;color:#999999;letter-spacing:0.00px;font-family:'Liberation Mono', monospace;letter-spacing:-2.4px;-webkit-text-stroke:0.3px #999999;transform:scaleX(0.88);transform-origin:16.9px 0">8</div>
<div class="t" style="left:250.7px;top:463.0px;font-size:30px;letter-spacing:-1.14px;-webkit-text-stroke:0.3px currentColor;font-family:'Liberation Mono',monospace"><span style="color:#000000">  </span><span style="color:#319331">]</span><span style="color:#000000">;</span></div>
<div class="t" style="left:168.6px;top:503.5px;font-size:32px;font-weight:400;color:#999999;letter-spacing:0.00px;font-family:'Liberation Mono', monospace;letter-spacing:-2.4px;-webkit-text-stroke:0.3px #999999;transform:scaleX(0.88);transform-origin:16.9px 0">9</div>
<div class="t" style="left:250.7px;top:505.0px;font-size:30px;letter-spacing:-1.14px;-webkit-text-stroke:0.3px currentColor;font-family:'Liberation Mono',monospace"></div>
<div class="t" style="left:151.8px;top:545.5px;font-size:32px;font-weight:400;color:#999999;letter-spacing:0.00px;font-family:'Liberation Mono', monospace;letter-spacing:-2.4px;-webkit-text-stroke:0.3px #999999;transform:scaleX(0.88);transform-origin:33.7px 0">10</div>
<div class="t" style="left:250.7px;top:547.0px;font-size:30px;letter-spacing:-1.14px;-webkit-text-stroke:0.3px currentColor;font-family:'Liberation Mono',monospace"><span style="color:#000000">  </span><span style="color:#0000ff">const</span><span style="color:#000000"> columns: </span><span style="color:#0000ff">string</span><span style="color:#319331">[]</span><span style="color:#000000"> = </span><span style="color:#319331">[</span><span style="color:#a31515">"Pokemon name"</span><span style="color:#000000">, </span><span style="color:#a31515">"Main strength"</span><span style="color:#000000">, </span><span style="color:#a31515">"Type"</span><span style="color:#319331">]</span><span style="color:#000000">;</span></div>
<div class="t" style="left:151.8px;top:587.5px;font-size:32px;font-weight:400;color:#999999;letter-spacing:0.00px;font-family:'Liberation Mono', monospace;letter-spacing:-2.4px;-webkit-text-stroke:0.3px #999999;transform:scaleX(0.88);transform-origin:33.7px 0">11</div>
<div class="t" style="left:250.7px;top:589.0px;font-size:30px;letter-spacing:-1.14px;-webkit-text-stroke:0.3px currentColor;font-family:'Liberation Mono',monospace"></div>
<div class="t" style="left:151.8px;top:629.5px;font-size:32px;font-weight:400;color:#999999;letter-spacing:0.00px;font-family:'Liberation Mono', monospace;letter-spacing:-2.4px;-webkit-text-stroke:0.3px #999999;transform:scaleX(0.88);transform-origin:33.7px 0">12</div>
<div class="t" style="left:250.7px;top:631.0px;font-size:30px;letter-spacing:-1.14px;-webkit-text-stroke:0.3px currentColor;font-family:'Liberation Mono',monospace"><span style="color:#000000">  </span><span style="color:#0000ff">return</span><span style="color:#000000"> </span><span style="color:#319331">[</span><span style="color:#000000">columns, ...pokemonData</span><span style="color:#319331">]</span><span style="color:#000000">;</span></div>
<div class="t" style="left:151.8px;top:671.5px;font-size:32px;font-weight:400;color:#0b216f;letter-spacing:0.00px;font-family:'Liberation Mono', monospace;letter-spacing:-2.4px;-webkit-text-stroke:0.3px #0b216f;transform:scaleX(0.88);transform-origin:33.7px 0">13</div>
<div class="t" style="left:250.7px;top:673.0px;font-size:30px;letter-spacing:-1.14px;-webkit-text-stroke:0.3px currentColor;font-family:'Liberation Mono',monospace"><span style="color:#0431fa">}</span></div>
</div>
<div class="r" style="left:1736px;top:162px;width:1px;height:1394px;background:#e8e8e8;"></div>
<div class="r" style="left:1737px;top:162px;width:13px;height:42px;background:#a0a0a0;"></div>
<div class="r" style="left:1737px;top:664px;width:27px;height:4px;background:#404040;"></div>
<div class="r" style="left:1737px;top:668px;width:13px;height:40px;background:#a0a0a0;"></div>
<div class="r" style="left:250px;top:1532px;width:1014px;height:24px;background:#c1c1c1;"></div>
<div class="r" style="left:1765px;top:162px;width:2px;height:1394px;background:#d9d9d9;"></div>
<div class="r" style="left:1767px;top:162px;width:1113px;height:1394px;background:#ffffff;z-index:-1"></div>
<div class="r" style="left:1767px;top:162px;width:1113px;height:8px;background:linear-gradient(to bottom, rgba(0,0,0,0.035), rgba(0,0,0,0));"></div>
<div class="r" style="left:2216px;top:170px;width:215px;height:60px;background:#3b4a69;border-radius:12px"></div>
<svg class="r" style="left:2241.0px;top:186.0px;" width="28" height="28" viewBox="0 0 24 24" fill="none" stroke="#ffffff" stroke-width="2" stroke-linecap="round" stroke-linejoin="round"><polygon points="6 3 20 12 6 21 6 3"/></svg>
<div class="t" style="left:2288.0px;top:188.2px;font-size:24px;font-weight:700;color:#ffffff;letter-spacing:0.81px;font-family:'Liberation Sans', sans-serif;">Test</div>
<svg class="r" style="left:2355.2px;top:187.5px;" width="23" height="23" viewBox="0 0 24 24" fill="none" stroke="#aab4c8" stroke-width="2.3" stroke-linecap="round" stroke-linejoin="round"><path d="M15 6v12a3 3 0 1 0 3-3H6a3 3 0 1 0 3 3V6a3 3 0 1 0-3 3h12a3 3 0 1 0-3-3"/></svg>
<svg class="r" style="left:2378.0px;top:184.5px;" width="30" height="30" viewBox="0 0 24 24" fill="none" stroke="#aab4c8" stroke-width="1.7" stroke-linecap="round" stroke-linejoin="round"><polyline points="9 10 4 15 9 20"/><path d="M20 4v7a4 4 0 0 1-4 4H4"/></svg>
<div class="t" style="left:1782.5px;top:237.5px;font-size:28px;font-weight:400;color:#4b5563;letter-spacing:0.90px;font-family:'Liberation Sans', sans-serif;">No inputs</div>
<div class="r" style="left:1767px;top:325px;width:1113px;height:2px;background:#e5e7eb;"></div>
<div class="t" style="left:1800.0px;top:346.5px;font-size:24px;font-weight:400;color:#283142;letter-spacing:0.27px;font-family:'Liberation Sans', sans-serif;">Logs &amp; Result</div>
<div class="t" style="left:2017.0px;top:346.5px;font-size:24px;font-weight:400;color:#283142;letter-spacing:1.05px;font-family:'Liberation Sans', sans-serif;">History</div>
<div class="r" style="left:1767px;top:387px;width:1113px;height:4px;background:#e5e7eb;"></div>
<div class="r" style="left:1767px;top:383px;width:218px;height:4px;background:#3f4a63;"></div>
<div class="r" style="left:1783px;top:407px;width:265px;height:48px;background:#f3f4f6;border-radius:12px"></div>
<div class="r" style="left:1787px;top:411px;width:124px;height:40px;background:#ffffff;border-radius:10px;box-shadow:0 2px 6px rgba(0,0,0,0.10), 0 1px 2px rgba(0,0,0,0.06)"></div>
<svg class="r" style="left:1798.7px;top:416.0px;" width="28" height="28" viewBox="0 0 24 24" fill="none" stroke="#3b82f6" stroke-width="2" stroke-linecap="round" stroke-linejoin="round"><path d="M9 3H5a2 2 0 0 0-2 2v4m6-6h10a2 2 0 0 1 2 2v4M9 3v18m0 0h10a2 2 0 0 0 2-2V9M9 21H5a2 2 0 0 1-2-2V9m0 0h18"/></svg>
<div class="t" style="left:1836.0px;top:418.5px;font-size:24px;font-weight:700;color:#4b5563;letter-spacing:0.28px;font-family:'Liberation Sans', sans-serif;">Table</div>
<svg class="r" style="left:1931.2px;top:417.5px;" width="27" height="27" viewBox="0 0 24 24" fill="none" stroke="#9ca3af" stroke-width="1.7" stroke-linecap="round" stroke-linejoin="round"><path d="M8 3H7a2 2 0 0 0-2 2v5a2 2 0 0 1-2 2 2 2 0 0 1 2 2v5c0 1.1.9 2 2 2h1"/><path d="M16 21h1a2 2 0 0 0 2-2v-5c0-1.1.9-2 2-2a2 2 0 0 1-2-2V5a2 2 0 0 0-2-2h-1"/></svg>
<div class="t" style="left:1967.4px;top:418.5px;font-size:24px;font-weight:700;color:#4b5563;letter-spacing:-0.35px;font-family:'Liberation Sans', sans-serif;">JSON</div>
<svg class="r" style="left:2692.0px;top:413.0px;" width="28" height="28" viewBox="0 0 24 24" fill="none" stroke="#475569" stroke-width="2" stroke-linecap="round" stroke-linejoin="round"><path d="M21 15v4a2 2 0 0 1-2 2H5a2 2 0 0 1-2-2v-4"/><polyline points="7 10 12 15 17 10"/><line x1="12" x2="12" y1="15" y2="3"/></svg>
<svg class="r" style="left:2740.0px;top:413.0px;" width="28" height="28" viewBox="0 0 24 24" fill="none" stroke="#475569" stroke-width="2" stroke-linecap="round" stroke-linejoin="round"><circle cx="12" cy="12" r="10"/><path d="M12 16v-4"/><path d="M12 8h.01"/></svg>
<svg class="r" style="left:2788.6px;top:413.0px;" width="28" height="28" viewBox="0 0 24 24" fill="none" stroke="#475569" stroke-width="2" stroke-linecap="round" stroke-linejoin="round"><rect width="8" height="4" x="8" y="2" rx="1" ry="1"/><path d="M8 4H6a2 2 0 0 0-2 2v14a2 2 0 0 0 2 2h12a2 2 0 0 0 2-2v-2"/><path d="M16 4h2a2 2 0 0 1 2 2v4"/><path d="M21 14H11"/><path d="m15 10-4 4 4 4"/></svg>
<svg class="r" style="left:2836.0px;top:413.0px;" width="28" height="28" viewBox="0 0 24 24" fill="none" stroke="#475569" stroke-width="2" stroke-linecap="round" stroke-linejoin="round"><path d="m21 21-6-6m6 6v-4.8m0 4.8h-4.8"/><path d="M3 16.2V21m0 0h4.8M3 21l6-6"/><path d="M21 7.8V3m0 0h-4.8M21 3l-6 6"/><path d="M3 7.8V3m0 0h4.8M3 3l6 6"/></svg>
<div class="r" style="left:1784px;top:472px;width:680px;height:62px;background:#ffffff;border:2px solid #d1d5db;border-radius:12px;box-sizing:border-box"></div>
<div class="t" style="left:1801.0px;top:491.5px;font-size:24px;font-weight:400;color:#5f6b7a;letter-spacing:0.24px;font-family:'Liberation Sans', sans-serif;">Search...</div>
<svg class="r" style="left:2507.4px;top:489.0px;" width="28" height="28" viewBox="0 0 24 24" fill="none" stroke="#1f2937" stroke-width="2" stroke-linecap="round" stroke-linejoin="round"><path d="M21 15v4a2 2 0 0 1-2 2H5a2 2 0 0 1-2-2v-4"/><polyline points="7 10 12 15 17 10"/><line x1="12" x2="12" y1="15" y2="3"/></svg>
<div class="t" style="left:2553.5px;top:491.5px;font-size:24px;font-weight:700;color:#283142;letter-spacing:0.02px;font-family:'Liberation Sans', sans-serif;">Download as CSV</div>
<svg class="r" style="left:2815.0px;top:487.0px;" width="32" height="32" viewBox="0 0 24 24" fill="none" stroke="#1f2937" stroke-width="2" stroke-linecap="round" stroke-linejoin="round"><circle cx="12" cy="12" r="1"/><circle cx="12" cy="5" r="1"/><circle cx="12" cy="19" r="1"/></svg>
<div class="r" style="left:1784px;top:551px;width:1078px;height:531px;background:#ffffff;border:2px solid #e5e7eb;border-radius:12px;box-sizing:border-box;overflow:hidden"></div>
<div class="r" style="left:1786px;top:553px;width:1074px;height:89px;background:#f3f4f6;border-radius:10px 10px 0 0"></div>
<div class="r" style="left:1786px;top:641px;width:1074px;height:2px;background:#e5e7eb;"></div>
<div class="r" style="left:1834px;top:581px;width:34px;height:31px;background:#f3f4f6;border:2px solid #d1d5db;border-radius:9px;box-sizing:border-box;box-shadow:0 1px 2px rgba(0,0,0,0.06)"></div>
<div class="t" style="left:1895.0px;top:584.5px;font-size:24px;font-weight:700;color:#1f2937;letter-spacing:-0.12px;font-family:'Liberation Sans', sans-serif;">Pokemon name</div>
<svg class="r" style="left:2089.0px;top:582.0px;" width="30" height="30" viewBox="0 0 24 24" fill="none" stroke="#9ca3af" stroke-width="2" stroke-linecap="round" stroke-linejoin="round"><path d="M12 2v20"/><path d="m8 18 4 4 4-4"/><path d="m8 6 4-4 4 4"/></svg>
<div class="r" style="left:2137px;top:581px;width:34px;height:31px;background:#f3f4f6;border:2px solid #d1d5db;border-radius:9px;box-sizing:border-box;box-shadow:0 1px 2px rgba(0,0,0,0.06)"></div>
<div class="t" style="left:2262.0px;top:584.5px;font-size:24px;font-weight:700;color:#1f2937;letter-spacing:0.22px;font-family:'Liberation Sans', sans-serif;">Main strength</div>
<svg class="r" style="left:2440.0px;top:582.0px;" width="30" height="30" viewBox="0 0 24 24" fill="none" stroke="#9ca3af" stroke-width="2" stroke-linecap="round" stroke-linejoin="round"><path d="M12 2v20"/><path d="m8 18 4 4 4-4"/><path d="m8 6 4-4 4 4"/></svg>
<div class="r" style="left:2487px;top:581px;width:34px;height:31px;background:#f3f4f6;border:2px solid #d1d5db;border-radius:9px;box-sizing:border-box;box-shadow:0 1px 2px rgba(0,0,0,0.06)"></div>
<div class="t" style="left:2609.0px;top:584.5px;font-size:24px;font-weight:700;color:#1f2937;letter-spacing:0.79px;font-family:'Liberation Sans', sans-serif;">Type</div>
<svg class="r" style="left:2683.0px;top:582.0px;" width="30" height="30" viewBox="0 0 24 24" fill="none" stroke="#9ca3af" stroke-width="2" stroke-linecap="round" stroke-linejoin="round"><path d="M12 2v20"/><path d="m8 18 4 4 4-4"/><path d="m8 6 4-4 4 4"/></svg>
<div class="r" style="left:2730px;top:581px;width:34px;height:31px;background:#f3f4f6;border:2px solid #d1d5db;border-radius:9px;box-sizing:border-box;box-shadow:0 1px 2px rgba(0,0,0,0.06)"></div>
<div class="r" style="left:1786px;top:716px;width:1074px;height:2px;background:#e5e7eb;"></div>
<div class="r" style="left:1834px;top:663.4px;width:34px;height:31.0px;background:#ffffff;border:2px solid #d1d5db;border-radius:9px;box-sizing:border-box;box-shadow:0 1px 2px rgba(0,0,0,0.06)"></div>
<div class="t" style="left:1896.0px;top:666.1px;font-size:24px;font-weight:400;color:#1f2937;letter-spacing:0.49px;font-family:'Liberation Sans', sans-serif;">Pikachu</div>
<div class="t" style="left:2263.0px;top:666.1px;font-size:24px;font-weight:400;color:#1f2937;letter-spacing:0.58px;font-family:'Liberation Sans', sans-serif;">Speed</div>
<div class="t" style="left:2610.0px;top:666.1px;font-size:24px;font-weight:400;color:#1f2937;letter-spacing:0.74px;font-family:'Liberation Sans', sans-serif;">Electric</div>
<div class="r" style="left:1786px;top:790px;width:1074px;height:2px;background:#e5e7eb;"></div>
<div class="r" style="left:1834px;top:737.4px;width:34px;height:31.0px;background:#ffffff;border:2px solid #d1d5db;border-radius:9px;box-sizing:border-box;box-shadow:0 1px 2px rgba(0,0,0,0.06)"></div>
<div class="t" style="left:1896.0px;top:740.1px;font-size:24px;font-weight:400;color:#1f2937;letter-spacing:0.47px;font-family:'Liberation Sans', sans-serif;">Charizard</div>
<div class="t" style="left:2263.0px;top:740.1px;font-size:24px;font-weight:400;color:#1f2937;letter-spacing:1.00px;font-family:'Liberation Sans', sans-serif;">Attack</div>
<div class="t" style="left:2610.0px;top:740.1px;font-size:24px;font-weight:400;color:#1f2937;letter-spacing:0.54px;font-family:'Liberation Sans', sans-serif;">Fire/Flying</div>
<div class="r" style="left:1786px;top:864px;width:1074px;height:2px;background:#e5e7eb;"></div>
<div class="r" style="left:1834px;top:811.4px;width:34px;height:31.0px;background:#ffffff;border:2px solid #d1d5db;border-radius:9px;box-sizing:border-box;box-shadow:0 1px 2px rgba(0,0,0,0.06)"></div>
<div class="t" style="left:1896.0px;top:814.1px;font-size:24px;font-weight:400;color:#1f2937;letter-spacing:0.40px;font-family:'Liberation Sans', sans-serif;">Bulbasaur</div>
<div class="t" style="left:2263.0px;top:814.1px;font-size:24px;font-weight:400;color:#1f2937;letter-spacing:0.54px;font-family:'Liberation Sans', sans-serif;">Defense</div>
<div class="t" style="left:2610.0px;top:814.1px;font-size:24px;font-weight:400;color:#1f2937;letter-spacing:0.45px;font-family:'Liberation Sans', sans-serif;">Grass/Poison</div>
<div class="r" style="left:1786px;top:938px;width:1074px;height:2px;background:#e5e7eb;"></div>
<div class="r" style="left:1834px;top:885.4px;width:34px;height:31.0px;background:#ffffff;border:2px solid #d1d5db;border-radius:9px;box-sizing:border-box;box-shadow:0 1px 2px rgba(0,0,0,0.06)"></div>
<div class="t" style="left:1896.0px;top:888.1px;font-size:24px;font-weight:400;color:#1f2937;letter-spacing:0.80px;font-family:'Liberation Sans', sans-serif;">Squirtle</div>
<div class="t" style="left:2263.0px;top:888.1px;font-size:24px;font-weight:400;color:#1f2937;letter-spacing:0.54px;font-family:'Liberation Sans', sans-serif;">Defense</div>
<div class="t" style="left:2610.0px;top:888.1px;font-size:24px;font-weight:400;color:#1f2937;letter-spacing:0.72px;font-family:'Liberation Sans', sans-serif;">Water</div>
<div class="r" style="left:1786px;top:1012px;width:1074px;height:2px;background:#e5e7eb;"></div>
<div class="r" style="left:1834px;top:959.4px;width:34px;height:31.0px;background:#ffffff;border:2px solid #d1d5db;border-radius:9px;box-sizing:border-box;box-shadow:0 1px 2px rgba(0,0,0,0.06)"></div>
<div class="t" style="left:1896.0px;top:962.1px;font-size:24px;font-weight:400;color:#1f2937;letter-spacing:1.23px;font-family:'Liberation Sans', sans-serif;">Jigglypuff</div>
<div class="t" style="left:2263.0px;top:962.1px;font-size:24px;font-weight:400;color:#1f2937;letter-spacing:-1.64px;font-family:'Liberation Sans', sans-serif;">HP</div>
<div class="t" style="left:2610.0px;top:962.1px;font-size:24px;font-weight:400;color:#1f2937;letter-spacing:0.68px;font-family:'Liberation Sans', sans-serif;">Normal/Fairy</div>
<div class="r" style="left:1881px;top:643px;width:2px;height:369px;background:#e5e7eb;"></div>
<div class="r" style="left:2249px;top:643px;width:2px;height:369px;background:#e5e7eb;"></div>
<div class="r" style="left:2596px;top:643px;width:2px;height:369px;background:#e5e7eb;"></div>
<div class="t" style="left:1810.0px;top:1039.1px;font-size:24px;font-weight:400;color:#1f2937;letter-spacing:0.61px;font-family:'Liberation Sans', sans-serif;">5 items</div>
<div class="t" style="left:2397.8px;top:1035.5px;font-size:24px;font-weight:400;color:#1f2937;letter-spacing:-0.19px;font-family:'Liberation Sans', sans-serif;">Page: 1 / 1</div>
<div class="r" style="left:2530px;top:1021px;width:126px;height:51px;background:#ffffff;border:2px solid #d1d5db;border-radius:12px;box-sizing:border-box;box-shadow:0 1px 2px rgba(0,0,0,0.05)"></div>
<div class="t" style="left:2547.0px;top:1035.5px;font-size:24px;font-weight:400;color:#1f2937;letter-spacing:1.31px;font-family:'Liberation Sans', sans-serif;">25</div>
<svg class="r" style="left:2606.0px;top:1031.0px;" width="30" height="30" viewBox="0 0 24 24" fill="none" stroke="#4b5563" stroke-width="1.8" stroke-linecap="round" stroke-linejoin="round"><path d="m6 9 6 6 6-6"/></svg>
<div class="r" style="left:2673px;top:1023px;width:179px;height:47px;background:#f9fafb;border-radius:10px"></div>
<svg class="r" style="left:2690.0px;top:1032.0px;" width="28" height="28" viewBox="0 0 24 24" fill="none" stroke="#6b7280" stroke-width="2" stroke-linecap="round" stroke-linejoin="round"><path d="m12 19-7-7 7-7"/><path d="M19 12H5"/></svg>
<div class="t" style="left:2737.0px;top:1035.5px;font-size:24px;font-weight:700;color:#6b7280;letter-spacing:-0.34px;font-family:'Liberation Sans', sans-serif;">Previous</div>
<script>(function(){try{var w=window.innerWidth;if(w&&Math.abs(w-2880)>4){document.documentElement.style.zoom=(w/2880);}}catch(e){}})();</script>
</body></html>
